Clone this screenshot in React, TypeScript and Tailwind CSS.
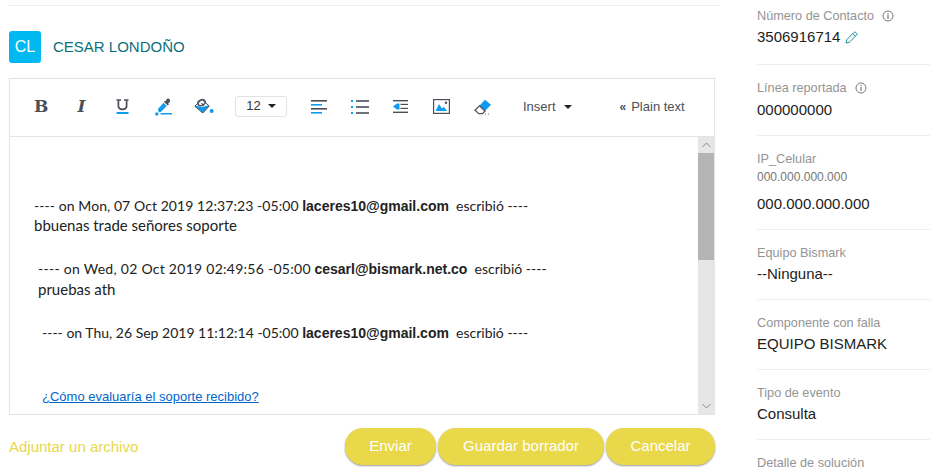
import React from 'react';

const BLUE = '#0f9bf0';
const DARK = '#4b4f58';

function BoldIcon() {
  return <span className="w-[13px] text-center text-[17px] leading-none font-bold text-[#4b4f58] font-['DejaVu_Serif',serif]">B</span>;
}

function ItalicIcon() {
  return <span className="w-[11px] text-center text-[17px] leading-none font-bold italic text-[#4b4f58] font-['DejaVu_Serif',serif]">I</span>;
}

function UnderlineIcon() {
  return (
    <svg width="13" height="15" viewBox="0 0 13 15">
      <path d="M0.500 1h4.500M8 1h4.500M2.400 1v6c0 4.400 8.200 4.400 8.200 0V1" fill="none" stroke={DARK} strokeWidth="1.700" />
      <rect x="0.500" y="13" width="12" height="2" fill={BLUE} />
    </svg>
  );
}

function PickerIcon() {
  return (
    <svg width="17" height="18" viewBox="0 0 17 18">
      <path d="M11.500 1.200c1-1 2.200-.9 3 0s.9 2 0 3l-1.400 1.400.8.8-1.200 1.200-3.800-3.800L10.100 2.600l.8.8z" fill={DARK} />
      <path d="M8.500 4.800l3.200 3.200-6.200 6.200H3.700L3 11.100z" fill={BLUE} />
      <circle cx="1.800" cy="16" r="1.700" fill={BLUE} />
      <rect x="5.500" y="15" width="11.500" height="1.500" fill={BLUE} />
    </svg>
  );
}

function BucketIcon() {
  return (
    <svg width="20" height="18" viewBox="0 0 20 18">
      <path d="M0.800 8.200L8 1.500l7.200 6.600L8.800 15z" fill={BLUE} stroke={DARK} strokeWidth="1" />
      <path d="M1.800 7.800L8 2.200l6 5.400-6.200 1.500z" fill="#fff" />
      <ellipse cx="7.500" cy="4.600" rx="3.800" ry="2.800" transform="rotate(-25 7.500 4.600)" fill="none" stroke={DARK} strokeWidth="1.500" />
      <path d="M7.500 5L9.500 8" stroke={DARK} strokeWidth="1.200" />
      <circle cx="17.600" cy="13" r="2" fill={BLUE} />
    </svg>
  );
}

function AlignIcon() {
  return (
    <svg width="16" height="14" viewBox="0 0 16 14">
      <rect y="0" width="16" height="1.600" fill={DARK} />
      <rect y="4" width="11" height="1.600" fill={BLUE} />
      <rect y="8" width="16" height="1.600" fill={DARK} />
      <rect y="12" width="11" height="1.600" fill={BLUE} />
    </svg>
  );
}

function ListIcon() {
  return (
    <svg width="18" height="14" viewBox="0 0 18 14">
      <rect x="0" y="0" width="2" height="2" fill={BLUE} />
      <rect x="0" y="6" width="2" height="2" fill={BLUE} />
      <rect x="0" y="12" width="2" height="2" fill={BLUE} />
      <rect x="5" y="0.200" width="13" height="1.600" fill={DARK} />
      <rect x="5" y="6.200" width="13" height="1.600" fill={DARK} />
      <rect x="5" y="12.200" width="13" height="1.600" fill={DARK} />
    </svg>
  );
}

function OutdentIcon() {
  return (
    <svg width="15" height="13" viewBox="0 0 15 13">
      <rect width="15" height="1.400" fill={DARK} />
      <path d="M0 6.500L4 3.500v6z" fill={BLUE} />
      <rect x="4" y="3.500" width="2.500" height="6" fill={BLUE} />
      <rect x="7.500" y="3.800" width="7.500" height="1.200" fill={DARK} />
      <rect x="7.500" y="7.800" width="7.500" height="1.200" fill={DARK} />
      <rect y="11.600" width="15" height="1.400" fill={DARK} />
    </svg>
  );
}

function ImageIcon() {
  return (
    <svg width="17" height="15" viewBox="0 0 17 15">
      <rect x="0.600" y="0.600" width="15.800" height="13.800" fill="#fff" stroke={DARK} strokeWidth="1.200" />
      <path d="M2.500 12l3.500-7 3 4.500 1.800-1.800 3.200 4.300z" fill={BLUE} />
      <circle cx="13" cy="3.800" r="1.200" fill={DARK} />
    </svg>
  );
}

function EraserIcon() {
  return (
    <svg width="18" height="16" viewBox="0 0 18 16">
      <path d="M11 0.800l6 5-6 6.200-5.600-5.200z" fill={BLUE} />
      <path d="M5.400 6.800L11 12l-2.400 2.600H4.800L1 11.300z" fill="#fff" stroke={DARK} strokeWidth="1.200" />
      <path d="M11 15h6" stroke={DARK} strokeWidth="0.800" strokeDasharray="1 2" />
    </svg>
  );
}

function Caret() {
  return <span className="inline-block h-0 w-0 border-x-[4px] border-t-[4px] border-x-transparent border-t-[#222]" />;
}

function InfoIcon() {
  return (
    <svg width="12" height="12" viewBox="0 0 12 12" className="shrink-0">
      <circle cx="6" cy="6" r="5" fill="none" stroke="#777" strokeWidth="1" />
      <rect x="5.400" y="5" width="1.200" height="4" fill="#777" />
      <rect x="5.400" y="3" width="1.200" height="1.200" fill="#777" />
    </svg>
  );
}

function PencilIcon() {
  return (
    <svg width="13" height="13" viewBox="0 0 13 13">
      <path d="M1 12l.8-3.400L9 1.400a1.200 1.200 0 0 1 1.700 0l.9.9a1.200 1.200 0 0 1 0 1.700L4.400 11.200zM7.800 2.600l2.600 2.600" fill="none" stroke="#1f8a96" strokeWidth="1" />
    </svg>
  );
}

function ChevronIcon({ down }: { down?: boolean }) {
  return (
    <svg width="9" height="6" viewBox="0 0 9 6">
      <path d={down ? 'M0.500 1l4 4 4-4' : 'M0.500 5l4-4 4 4'} fill="none" stroke="#8a8a8a" strokeWidth="1" />
    </svg>
  );
}

function QuoteLine({ before, email, className, beforeClass }: { before: string; email: string; className: string; beforeClass?: string }) {
  return (
    <div className={`text-[14px] ${className}`}>
      <span className={beforeClass}>{before}</span> <b className="font-bold font-['Liberation_Sans',sans-serif]">{email}</b>&nbsp; escribió ----
    </div>
  );
}

const fields = [
  { label: 'Número de Contacto', value: '3506916714', info: true, edit: true },
  { label: 'Línea reportada', value: '000000000', info: true },
  { label: 'IP_Celular', sub: '000.000.000.000', value: '000.000.000.000' },
  { label: 'Equipo Bismark', value: '--Ninguna--' },
  { label: 'Componente con falla', value: 'EQUIPO BISMARK' },
  { label: 'Tipo de evento', value: 'Consulta' },
  { label: 'Detalle de solución', value: '' },
];

const buttonClass = 'h-[37px] rounded-[18px] bg-[#e8d84a] text-[15px] text-white shadow-[0_1px_2px_rgba(0,0,0,0.4)]';

export default function App() {
  return (
    <div className="flex h-[471px] w-[930px] overflow-hidden bg-white font-['Liberation_Sans',sans-serif] text-[14px] text-[#222]">
      <div className="w-[757px] shrink-0 pl-[9px]">
        <div className="mt-[5px] h-px w-[711px] bg-[#eeeeee]" />
        <div className="mt-[25px] flex h-[32px] items-center gap-[12px]">
          <div className="flex h-[32px] w-[32px] items-center justify-center rounded-[3px] bg-[#00b9f1] text-[16px] text-white">CL</div>
          <div className="text-[15px] text-[#0b6f7a]">CESAR LONDOÑO</div>
        </div>

        <div className="mt-[15px] h-[337px] w-[706px] border border-[#e3e3e3]">
          <div className="flex h-[58px] items-center border-b border-[#e3e3e3] pb-[2px] pl-[24px]">
            <BoldIcon />
            <span className="w-[29px]" />
            <ItalicIcon />
            <span className="w-[29px]" />
            <UnderlineIcon />
            <span className="w-[26px]" />
            <PickerIcon />
            <span className="w-[22px]" />
            <BucketIcon />
            <span className="w-[21px]" />
            <div className="mb-[1px] flex h-[21px] w-[52px] items-center justify-center gap-[7px] rounded-[3px] border border-[#e3e3e3] text-[13px] text-[#333]">
              12 <Caret />
            </div>
            <span className="w-[24px]" />
            <AlignIcon />
            <span className="w-[24px]" />
            <ListIcon />
            <span className="w-[24px]" />
            <OutdentIcon />
            <span className="w-[25px]" />
            <ImageIcon />
            <span className="w-[24px]" />
            <EraserIcon />
            <span className="w-[31px]" />
            <div className="flex items-center gap-[8px] text-[13px] text-[#4b4f58]">
              Insert <Caret />
            </div>
            <span className="w-[48px]" />
            <div className="flex items-center gap-[5px] text-[13px] text-[#4b4f58]">
              <span className="text-[12px] font-bold">«</span> Plain text
            </div>
          </div>

          <div className="flex h-[277px]">
            <div className="w-[688px] pl-[24px] pt-[59px] font-['Lato',sans-serif] text-[15px] leading-[20px] text-[#222]">
              <QuoteLine before="---- on Mon, 07 Oct 2019 12:37:23 -05:00" email="laceres10@gmail.com" className="" beforeClass="tracking-[0.07px]" />
              <div className="-mt-px">bbuenas trade señores soporte</div>
              <QuoteLine before="---- on Wed, 02 Oct 2019 02:49:56 -05:00" email="cesarl@bismark.net.co" className="ml-[4px] mt-[24px]" beforeClass="tracking-[0.27px]" />
              <div className="ml-[4px]">pruebas ath</div>
              <QuoteLine before="---- on Thu, 26 Sep 2019 11:12:14 -05:00" email="laceres10@gmail.com" className="ml-[8px] mt-[24px]" />
              <a href="#" className="ml-[8px] mt-[44px] block font-['Liberation_Sans',sans-serif] text-[13px] text-[#0066cc] underline">¿Cómo evaluaría el soporte recibido?</a>
            </div>
            <div className="flex w-[16px] flex-col bg-[#e6e6e6]">
              <div className="flex h-[16px] items-center justify-center"><ChevronIcon /></div>
              <div className="h-[107px] bg-[#b4b4b4]" />
              <div className="flex-1" />
              <div className="flex h-[16px] items-center justify-center"><ChevronIcon down /></div>
            </div>
          </div>
        </div>

        <div className="mt-[13px] flex w-[706px] items-center justify-between">
          <div className="mt-[2px] text-[15px] text-[#e8d84a]">Adjuntar un archivo</div>
          <div className="flex gap-[2px]">
            <button className={`${buttonClass} w-[91px]`}>Enviar</button>
            <button className={`${buttonClass} w-[166px]`}>Guardar borrador</button>
            <button className={`${buttonClass} w-[109px]`}>Cancelar</button>
          </div>
        </div>
      </div>

      <div className="flex-1">
        {fields.map((f, i) => (
          <div key={f.label} className={`border-b border-[#eeeeee] ${i === 0 ? 'pb-[17px] pt-[8px]' : 'pb-[15px] pt-[15px]'}`}>
            <div className="flex items-center gap-[8px] text-[12.7px] leading-[16px] text-[#949494]">
              {f.label}
              {f.info && <InfoIcon />}
            </div>
            {f.sub && <div className="mt-[3px] text-[12px] leading-[14px] text-[#777]">{f.sub}</div>}
            <div className={`flex items-center gap-[5px] text-[15px] leading-[20px] text-[#222] ${i === 0 || i > 2 ? 'mt-[3px]' : f.sub ? 'mt-[10px]' : 'mt-[4px]'}`}>
              {f.value}
              {f.edit && <PencilIcon />}
            </div>
          </div>
        ))}
      </div>
    </div>
  );
}
